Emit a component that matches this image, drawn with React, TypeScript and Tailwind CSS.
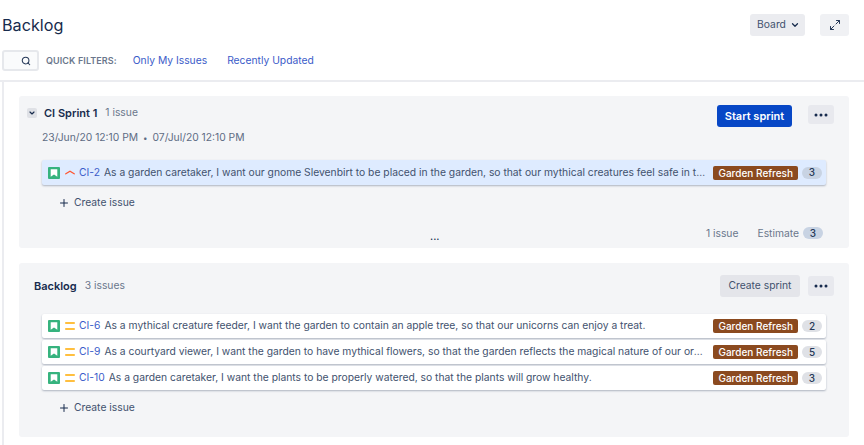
import { ChevronDown, Maximize2, Plus, Search } from "lucide-react";

const SPRINT_ISSUE = {
  id: "CI-2",
  text: "As a garden caretaker, I want our gnome Slevenbirt to be placed in the garden, so that our mythical creatures feel safe in their home and can thrive",
  points: 3,
};

const BACKLOG_ISSUES = [
  { id: "CI-6", text: "As a mythical creature feeder, I want the garden to contain an apple tree, so that our unicorns can enjoy a treat.", points: 2 },
  { id: "CI-9", text: "As a courtyard viewer, I want the garden to have mythical flowers, so that the garden reflects the magical nature of our organisation and its guests", points: 5 },
  { id: "CI-10", text: "As a garden caretaker, I want the plants to be properly watered, so that the plants will grow healthy.", points: 3 },
];

function StoryIcon() {
  return (
    <svg width="12" height="12" viewBox="0 0 12 12" className="shrink-0">
      <rect width="12" height="12" rx="1" fill="#36b37e" />
      <path d="M2.700 2.300h6.600v7.400L6 7.500 2.700 9.700z" fill="#fff" />
    </svg>
  );
}

function HighIcon() {
  return (
    <svg width="10" height="12" viewBox="0 0 10 12" className="shrink-0" fill="none">
      <path d="M.8 6.800 5 4.200l4.200 2.600" stroke="#ff5630" strokeWidth="1.300" strokeLinecap="round" />
    </svg>
  );
}

function MediumIcon() {
  return (
    <svg width="10" height="12" viewBox="0 0 10 12" className="shrink-0" fill="none">
      <path d="M.7 3h8.600M.7 9h8.600" stroke="#ffab00" strokeWidth="1.400" strokeLinecap="round" />
    </svg>
  );
}

function Dots() {
  return (
    <svg width="14" height="4" viewBox="0 0 14 4">
      <circle cx="2" cy="2" r="1.500" fill="#172b4d" />
      <circle cx="7" cy="2" r="1.500" fill="#172b4d" />
      <circle cx="12" cy="2" r="1.500" fill="#172b4d" />
    </svg>
  );
}

function PointsBadge({ value, active }: { value: number; active?: boolean }) {
  return (
    <span
      className={`flex h-[12px] w-[20px] shrink-0 items-center justify-center rounded-full text-[10px] font-medium text-[#253858] ${
        active ? "bg-[#c8d3e3]" : "bg-[#dfe1e6]"
      }`}
    >
      {value}
    </span>
  );
}

function IssueRow({ id, text, points, selected }: { id: string; text: string; points: number; selected?: boolean }) {
  return (
    <div
      className={`flex items-center rounded-[2px] pl-[6px] pr-[4px] shadow-[0_1px_2px_rgba(9,30,66,0.3)] ${
        selected ? "h-[25px] bg-[#deebff]" : "h-[24px] bg-white"
      }`}
    >
      <StoryIcon />
      <span className="ml-[5px]">{selected ? <HighIcon /> : <MediumIcon />}</span>
      <a className="ml-[4px] shrink-0 text-[#3b5cc9]">{id}</a>
      <span className="ml-[4px] min-w-0 flex-1 truncate text-[#42526e]">{text}</span>
      <span className="ml-[6px] shrink-0 rounded-[2px] bg-[#8b4a1f] px-[5px] text-[10px] leading-[14px] font-medium text-white">
        Garden Refresh
      </span>
      <span className="ml-[4px]">
        <PointsBadge value={points} active={selected} />
      </span>
    </div>
  );
}

function CreateIssue() {
  return (
    <div className="mt-[6px] flex h-[24px] items-center gap-[4px] pl-[16px] text-[#42526e]">
      <Plus size={12} strokeWidth={2} className="text-[#172b4d]" />
      Create issue
    </div>
  );
}

export default function App() {
  return (
    <div className="h-[445px] w-[864px] overflow-hidden bg-white font-['Inter',sans-serif] text-[10.3px] text-[#172b4d]">
      <header className="flex items-start justify-between pl-[2px] pr-[15px] pt-[14px]">
        <h1 className="text-[16.2px] leading-[22px] text-[#172b4d]">Backlog</h1>
        <div className="flex gap-[15px]">
          <button className="flex h-[22px] w-[55px] items-center justify-center gap-[4px] rounded-[3px] bg-[#ebecf0] pl-[2px] text-[#42526e]">
            Board
            <ChevronDown size={10} strokeWidth={3} className="text-[#172b4d]" />
          </button>
          <button className="flex h-[22px] w-[29px] items-center justify-center rounded-[3px] bg-[#f0f1f4] text-[#253858]">
            <Maximize2 size={12} strokeWidth={2} />
          </button>
        </div>
      </header>

      <div className="mt-[14px] flex h-[21px] items-center pl-[2px]">
        <div className="flex h-[21px] w-[37px] items-center justify-end rounded-[3px] border-2 border-[#e6e8ec] bg-[#fafbfc] pr-[6px]">
          <Search size={10} strokeWidth={2.5} className="text-[#253858]" />
        </div>
        <span className="ml-[7px] text-[9px] font-semibold tracking-[0.1px] text-[#6b778c]">QUICK FILTERS:</span>
        <a className="ml-[16px] text-[#3b5cc9]">Only My Issues</a>
        <a className="ml-[20px] text-[#3b5cc9]">Recently Updated</a>
      </div>

      <div className="mt-[9px] h-[2px] bg-[#ebecf0]" />

      <div className="ml-[2px] flex flex-col gap-[15px] border-l-2 border-[#ebecf0] pb-[20px] pl-[15px] pr-[15px] pt-[14px]">
        <section className="relative h-[152px] rounded-[3px] bg-[#f4f5f7] pl-[8px] pr-[15px] pt-[9px]">
          <div className="flex h-[22px] items-start">
            <div className="flex h-[16px] items-center">
              <span className="flex h-[10px] w-[10px] items-center justify-center rounded-[2px] bg-[#dfe1e6]">
                <ChevronDown size={8} strokeWidth={3.5} />
              </span>
              <span className="ml-[7px] text-[11px] font-semibold">CI Sprint 1</span>
              <span className="ml-[8px] text-[#6b778c]">1 issue</span>
            </div>
            <button className="ml-auto flex h-[22px] w-[75px] items-center justify-center rounded-[3px] bg-[#0747c6] text-[11px] font-semibold text-white">
              Start sprint
            </button>
            <button className="ml-[16px] flex h-[19px] w-[26px] items-center justify-center rounded-[3px] bg-[#e8e9ee]">
              <Dots />
            </button>
          </div>
          <div className="flex h-[22px] items-center gap-[5px] pl-[15px] text-[#5e6c84]">
            <span>23/Jun/20 12:10 PM</span>
            <span className="text-[8px]">•</span>
            <span>07/Jul/20 12:10 PM</span>
          </div>
          <div className="ml-[15px] mr-[8px] mt-[11px]">
            <IssueRow {...SPRINT_ISSUE} selected />
          </div>
          <div className="ml-[15px]">
            <CreateIssue />
          </div>
          <div className="absolute bottom-[7px] right-[8px] flex items-center text-[#6b778c]">
            <span>1 issue</span>
            <span className="ml-[19px]">Estimate</span>
            <span className="ml-[4px] mr-[18px]">
              <PointsBadge value={3} active />
            </span>
          </div>
          <span className="absolute bottom-[5px] left-[411px] text-[11px] leading-[14px]">...</span>
        </section>

        <section className="h-[174px] rounded-[3px] bg-[#f4f5f7] pl-[15px] pr-[15px] pt-[12px]">
          <div className="flex h-[22px] items-center">
            <span className="text-[11px] font-semibold">Backlog</span>
            <span className="ml-[8px] text-[#6b778c]">3 issues</span>
            <button className="ml-auto flex h-[22px] w-[80px] items-center justify-center rounded-[3px] bg-[#e4e5ea] text-[#42526e]">
              Create sprint
            </button>
            <button className="ml-[8px] flex h-[20px] w-[26px] items-center justify-center rounded-[3px] bg-[#e8e9ee]">
              <Dots />
            </button>
          </div>
          <div className="ml-[8px] mr-[8px] mt-[17px] flex flex-col gap-[2px]">
            {BACKLOG_ISSUES.map((issue) => (
              <IssueRow key={issue.id} {...issue} />
            ))}
          </div>
          <div className="ml-[8px]">
            <CreateIssue />
          </div>
        </section>
      </div>
    </div>
  );
}
